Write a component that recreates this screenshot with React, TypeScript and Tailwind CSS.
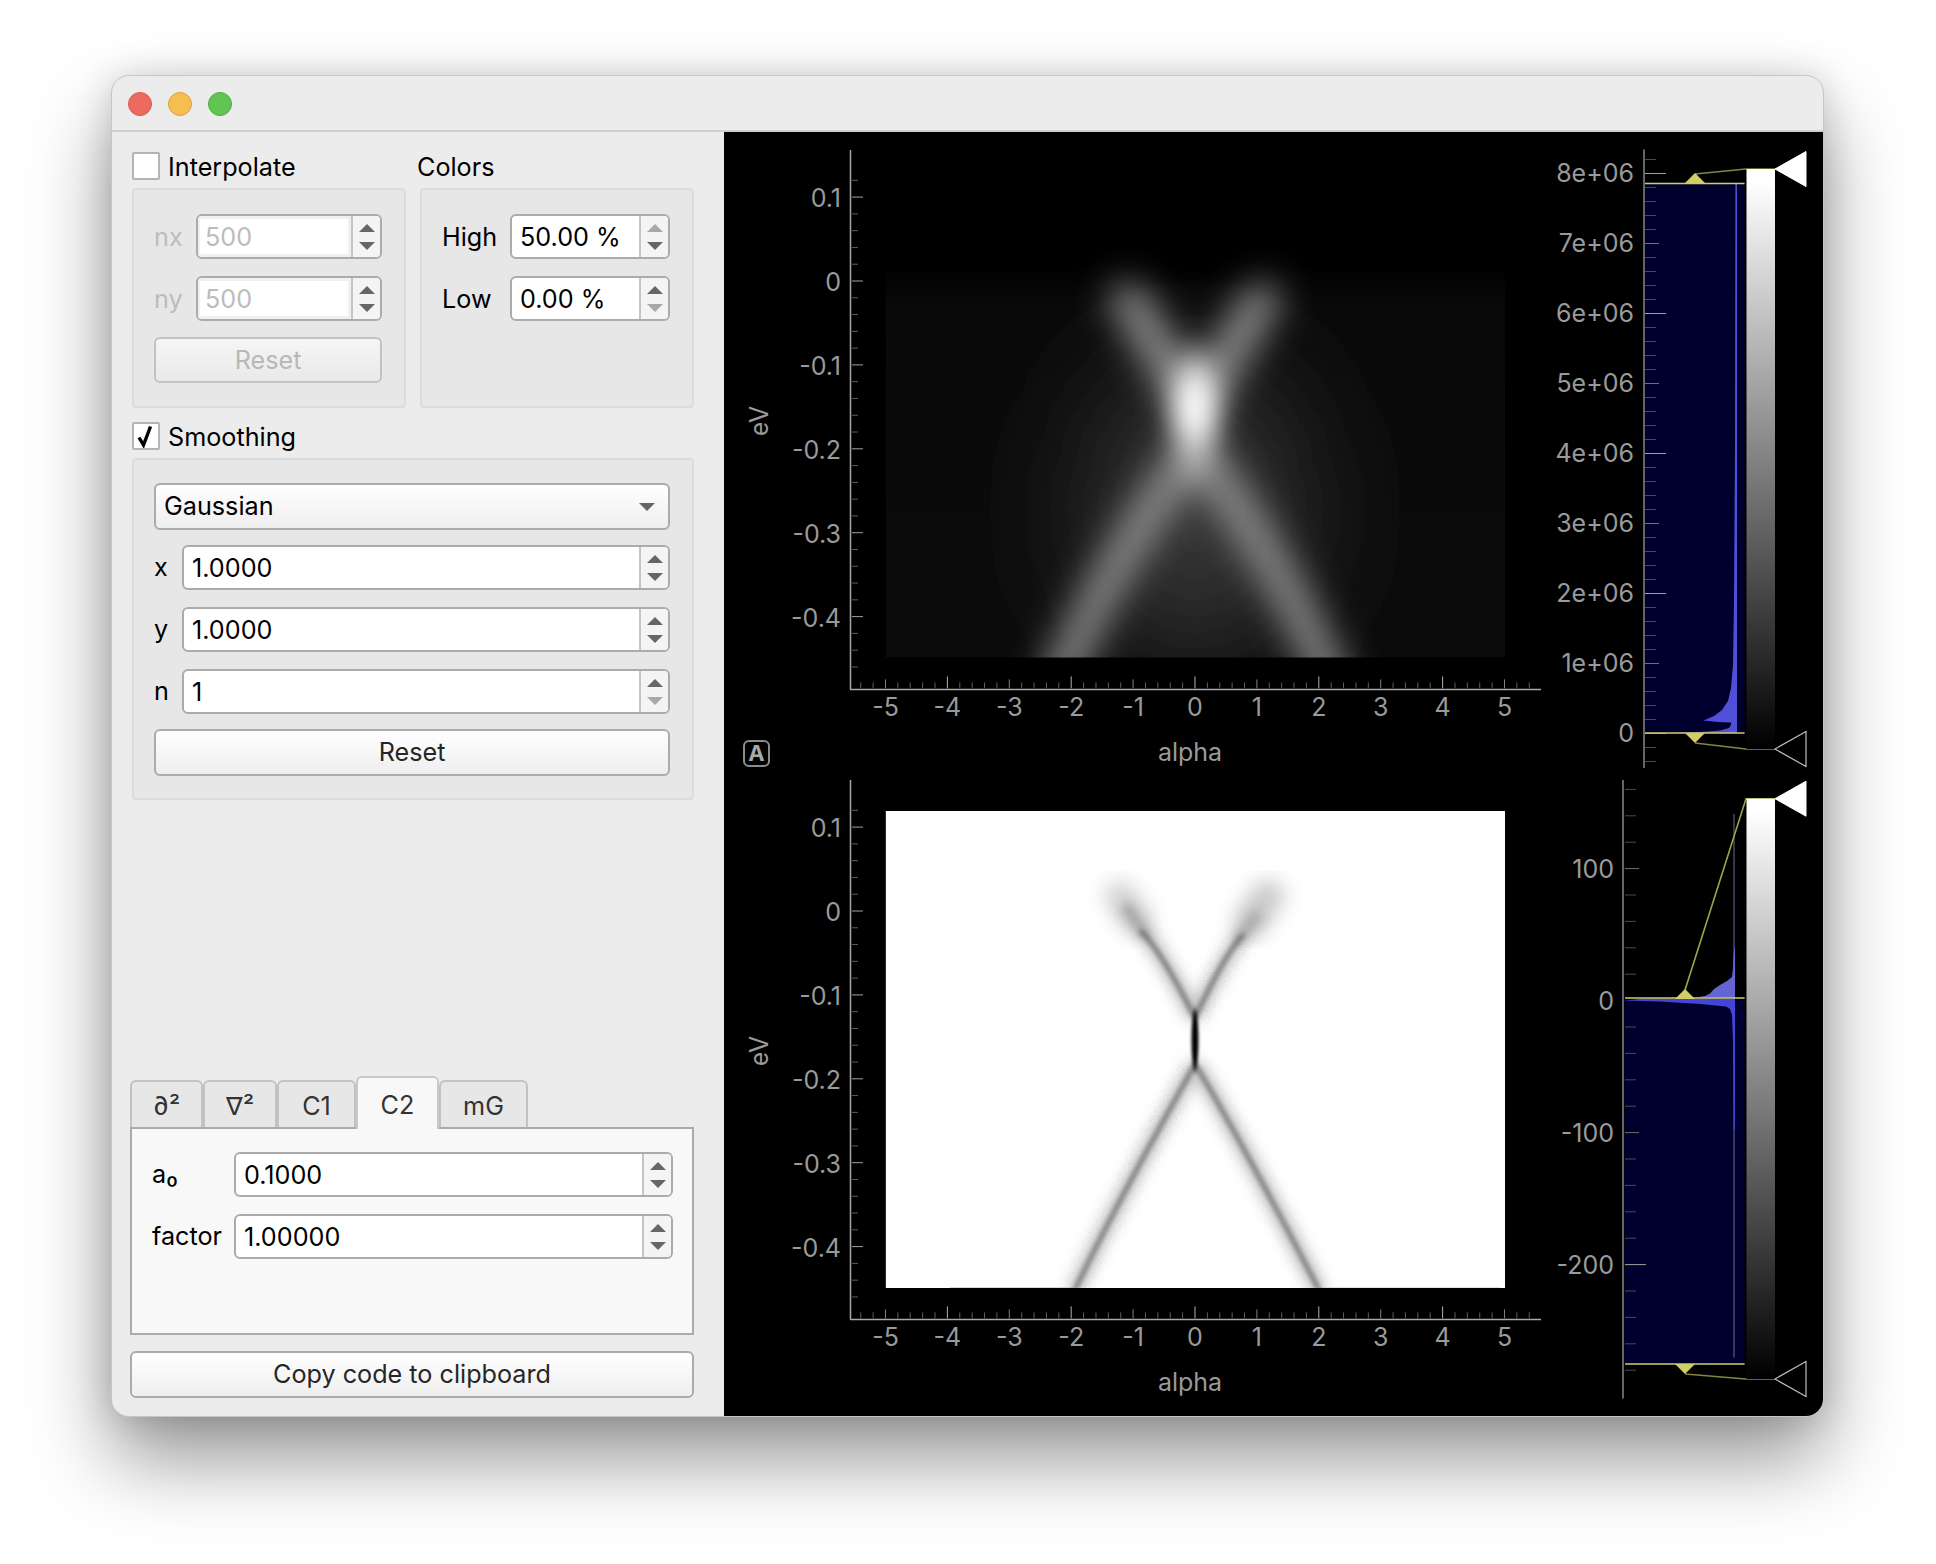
import React from 'react';

const Arrow = ({ dir, faded }: { dir: 'up' | 'down'; faded?: boolean }) => (
  <svg width="16" height="8" viewBox="0 0 16 8" className={faded ? 'fill-[#a8a8a8]' : 'fill-[#666666]'}>
    <polygon points={dir === 'up' ? '8,0 16,8 0,8' : '0,0 16,0 8,8'} />
  </svg>
);

type SpinProps = {
  value: string;
  className: string;
  disabled?: boolean;
  upFaded?: boolean;
  downFaded?: boolean;
};

const Spin = ({ value, className, disabled, upFaded, downFaded }: SpinProps) => (
  <div className={`flex h-[45px] rounded-[6px] border-2 border-[#ababab] bg-white ${className}`}>
    {disabled ? (
      <div className="flex-1 flex items-center pl-[5px] pt-[2px] rounded-l-[4px] text-[#bcbcbc] border-[3px] border-l-2 border-[#f0f0f0]">
        {value}
      </div>
    ) : (
      <div className="flex-1 flex items-center pl-[8px] pt-[3px] text-black">{value}</div>
    )}
    <div className="w-[29px] border-l-2 border-[#c4c4c4] bg-[#f4f4f4] rounded-r-[4px] flex flex-col items-center justify-center gap-[10px]">
      <Arrow dir="up" faded={upFaded} />
      <Arrow dir="down" faded={downFaded} />
    </div>
  </div>
);

const Check = ({ checked }: { checked?: boolean }) => (
  <div className="w-[28px] h-[28px] bg-white border-2 border-[#b4b4b4] rounded-[2px] flex items-center justify-center">
    {checked && (
      <svg width="20" height="24" viewBox="0 0 20 24">
        <path d="M3 13.5 L7.5 21 L14.5 2.5" fill="none" stroke="#000" strokeWidth="3.4" />
      </svg>
    )}
  </div>
);

const Group = ({ className, children }: { className: string; children: React.ReactNode }) => (
  <div className={`border-2 border-[#dcdcdc] rounded-[4px] bg-[#e7e7e7] ${className}`}>{children}</div>
);

const Button = ({ label, className }: { label: string; className: string }) => (
  <div
    className={`flex items-center justify-center pt-[1px] rounded-[6px] border-2 border-[#ababab] bg-gradient-to-b from-white to-[#eeeeee] text-[#262626] ${className}`}
  >
    {label}
  </div>
);

const Tab = ({ label, className }: { label: string; className: string }) => (
  <div
    className={`h-[47px] flex items-center justify-center pt-[5px] rounded-t-[6px] border-2 border-b-0 border-[#c2c2c2] bg-[#e7e7e7] text-[#333333] ${className}`}
  >
    {label}
  </div>
);

const range = (from: number, to: number, step: number) => {
  const out: number[] = [];
  for (let v = from; v <= to + 0.01; v += step) out.push(v);
  return out;
};

const AXIS = '#a8a8a8';
const LABEL = 'fill-[#9a9a9a] text-[25px]';

// left and bottom axes of a plot, in page coordinates of the upper plot plus dy
const Axes = ({ dy }: { dy: number }) => {
  const x0 = 1195;
  const xStep = 61.9;
  const y0 = 281 + dy;
  const yStep = 83.9;
  const axisY = 689.4 + dy;
  return (
    <g>
      <line x1="850.5" y1={150 + dy} x2="850.5" y2={axisY} stroke={AXIS} strokeWidth="1.5" />
      <line x1="850" y1={axisY} x2="1541" y2={axisY} stroke={AXIS} strokeWidth="1.5" />
      {range(-6, 23, 1).map((i) => {
        const y = y0 + (i * yStep) / 5;
        const major = i % 5 === 0;
        return (
          <line
            key={i}
            x1="852"
            x2={major ? 863 : 858}
            y1={y}
            y2={y}
            stroke={major ? '#a0a0a0' : '#5e5e5e'}
            strokeWidth="1"
          />
        );
      })}
      {range(-27, 27, 1).map((i) => {
        const x = x0 + (i * xStep) / 5;
        const major = i % 5 === 0;
        const even = i % 10 === 0;
        return (
          <line
            key={i}
            x1={x}
            x2={x}
            y1={axisY - (even ? 13 : major ? 10 : 7)}
            y2={axisY - 1}
            stroke={even ? '#b0b0b0' : major ? '#808080' : '#5e5e5e'}
            strokeWidth="1"
          />
        );
      })}
      {['0.1', '0', '-0.1', '-0.2', '-0.3', '-0.4'].map((t, i) => (
        <text key={t} x="841" y={y0 + (i - 1) * yStep + 10} textAnchor="end" className={LABEL}>
          {t}
        </text>
      ))}
      {[-5, -4, -3, -2, -1, 0, 1, 2, 3, 4, 5].map((t) => (
        <text key={t} x={x0 + t * xStep} y={716 + dy} textAnchor="middle" className={LABEL}>
          {t}
        </text>
      ))}
      <text x="1190" y={761 + dy} textAnchor="middle" className={LABEL}>
        alpha
      </text>
      <text
        x="768"
        y={421 + dy}
        textAnchor="middle"
        transform={`rotate(-90 768 ${421 + dy})`}
        className={LABEL}
      >
        eV
      </text>
    </g>
  );
};

const GrayBar = ({ top, bottom, id }: { top: number; bottom: number; id: string }) => (
  <g>
    <defs>
      <linearGradient id={id} x1="0" y1="0" x2="0" y2="1">
        <stop offset="0" stopColor="#ffffff" />
        <stop offset="0.02" stopColor="#ffffff" />
        <stop offset="1" stopColor="#000000" />
      </linearGradient>
    </defs>
    <rect x="1746.5" y={top} width="28.5" height={bottom - top} fill={`url(#${id})`} />
    <polygon points={`1775,${top} 1806,${top - 17.5} 1806,${top + 17.5}`} fill="#ffffff" stroke="#ffffff" />
    <polygon
      points={`1775,${bottom} 1806,${bottom - 17.5} 1806,${bottom + 17.5}`}
      fill="none"
      stroke="#bcbcbc"
      strokeWidth="1.2"
    />
  </g>
);

const Handles = ({
  x,
  hi,
  lo,
  barTop,
  barBottom,
  hiLineColor,
}: {
  x: number;
  hi: number;
  lo: number;
  barTop: number;
  barBottom: number;
  hiLineColor: string;
}) => (
  <g>
    <polyline points={`${x},${hi - 9} 1746,${barTop} 1775,${barTop}`} fill="none" stroke={hiLineColor} strokeWidth="1.6" />
    <polyline points={`${x},${lo + 10} 1746,${barBottom} 1775,${barBottom}`} fill="none" stroke="#85853f" strokeWidth="1.6" />
    <polygon points={`${x - 10},${hi} ${x},${hi - 10} ${x + 10},${hi}`} fill="#cfcf66" />
    <polygon points={`${x - 10},${lo} ${x},${lo + 10} ${x + 10},${lo}`} fill="#cfcf66" />
  </g>
);

const TopHist = () => {
  const labels = ['8e+06', '7e+06', '6e+06', '5e+06', '4e+06', '3e+06', '2e+06', '1e+06', '0'];
  return (
    <g>
      <rect x="1645" y="183.5" width="99.6" height="549.5" fill="#00002e" />
      <path
        d="M1735.4 183.5 L1737 183.5 L1737 733 L1668 733 L1700 732 L1720 730.5 L1729 728 L1731 725 L1731 722.5 L1718 722 L1703.5 720.5 L1714 716 L1722 710 L1728 701 L1731 688 L1733 665 L1734 600 L1735 450 Z"
        fill="#4f4fd8"
      />
      <line x1="1644" y1="149.5" x2="1644" y2="768" stroke={AXIS} strokeWidth="1.2" />
      {range(-1, 42, 1).map((i) => {
        const y = 173.5 + i * 14;
        const major = i % 5 === 0;
        const long = i % 10 === 0;
        return (
          <line
            key={i}
            x1="1645"
            x2={long ? 1666 : major ? 1659 : 1656}
            y1={y}
            y2={y}
            stroke={long ? '#a0a0a0' : major ? '#707070' : '#4a4a4a'}
            strokeWidth="1"
          />
        );
      })}
      {labels.map((t, i) => (
        <text key={t} x="1634" y={173 + i * 70 + 9} textAnchor="end" className={LABEL}>
          {t}
        </text>
      ))}
      <line x1="1645" y1="183.5" x2="1744.6" y2="183.5" stroke="#cfcf66" strokeWidth="1.3" />
      <line x1="1645" y1="733" x2="1744.6" y2="733" stroke="#cfcf66" strokeWidth="1.3" />
      <Handles x={1695} hi={183} lo={733} barTop={169} barBottom={749} hiLineColor="#85853f" />
      <GrayBar top={169} bottom={749} id="bar-top" />
    </g>
  );
};

const BottomHist = () => (
  <g>
    <rect x="1624.5" y="1000" width="120" height="364" fill="#00002e" />
    <line x1="1734" y1="814" x2="1734" y2="1357.5" stroke="#6c6c8c" strokeWidth="1" />
    <path
      d="M1695 997.5 L1705 996 L1710 993.5 L1714 989 L1720 985 L1727 981 L1732 977 L1733 968 L1733.5 955 L1735 945 L1735 998 Z"
      fill="#6464d2"
    />
    <path
      d="M1645 998.5 L1735 998.5 L1735 1040 L1734.8 1130 L1733.8 1130 L1733 1040 L1732 1015 L1730 1009 L1726 1006.5 L1700 1004 L1660 1001.5 L1624 1000.5 Z"
      fill="#4444d6"
    />
    <line x1="1623" y1="780" x2="1623" y2="1398.5" stroke={AXIS} strokeWidth="1.2" />
    {range(-3, 19, 1).map((i) => {
      const y = 868.6 + i * 26.4;
      const major = i % 5 === 0;
      const long = i === 15;
      return i === 5 ? null : (
        <line
          key={i}
          x1="1625"
          x2={long ? 1646 : major ? 1639 : 1636}
          y1={y}
          y2={y}
          stroke={long ? '#a0a0a0' : major ? '#707070' : '#4a4a4a'}
          strokeWidth="1"
        />
      );
    })}
    {[
      ['100', 868.6],
      ['0', 1000.7],
      ['-100', 1133],
      ['-200', 1265],
    ].map(([t, y]) => (
      <text key={t} x="1614" y={Number(y) + 9} textAnchor="end" className={LABEL}>
        {t}
      </text>
    ))}
    <line x1="1625" y1="998" x2="1744.6" y2="998" stroke="#cfcf66" strokeWidth="1.3" />
    <line x1="1625" y1="1364" x2="1744.6" y2="1364" stroke="#cfcf66" strokeWidth="1.3" />
    <Handles x={1685} hi={999} lo={1364} barTop={798.7} barBottom={1379} hiLineColor="#a3a34a" />
    <GrayBar top={798.7} bottom={1379} id="bar-bottom" />
  </g>
);

const TopImage = () => (
  <g>
    <defs>
      <filter id="b40" x="-150%" y="-100%" width="400%" height="300%">
        <feGaussianBlur stdDeviation="70 60" />
      </filter>
      <filter id="b14" x="-50%" y="-50%" width="200%" height="200%">
        <feGaussianBlur stdDeviation="19" />
      </filter>
      <filter id="b11" x="-200%" y="-100%" width="500%" height="300%">
        <feGaussianBlur stdDeviation="13 22" />
      </filter>
      <clipPath id="clip-top">
        <rect x="885.6" y="181" width="619.4" height="476.6" />
      </clipPath>
      <linearGradient id="base-top" x1="0" y1="0" x2="0" y2="1">
        <stop offset="0" stopColor="#000000" />
        <stop offset="0.18" stopColor="#000000" />
        <stop offset="0.26" stopColor="#090909" />
        <stop offset="1" stopColor="#0b0b0b" />
      </linearGradient>
    </defs>
    <g clipPath="url(#clip-top)">
      <rect x="885.6" y="181" width="619.4" height="476.6" fill="url(#base-top)" />
      <g filter="url(#b40)">
        <ellipse cx="1195" cy="510" rx="90" ry="150" fill="#404040" />
      </g>
      <g filter="url(#b14)" fill="none" stroke="#b4b4b4" strokeLinecap="round">
        <path d="M1127 298 C1145 328 1172 368 1195 415" strokeWidth="28" />
        <path d="M1263 298 C1245 328 1218 368 1195 415" strokeWidth="28" />
        <path d="M1195 450 C1165 485 1095 590 1056 690" strokeWidth="28" stroke="#a8a8a8" />
        <path d="M1195 450 C1225 485 1295 590 1334 690" strokeWidth="28" stroke="#a8a8a8" />
      </g>
      <g filter="url(#b11)">
        <ellipse cx="1195" cy="409" rx="22" ry="46" fill="#ffffff" />
      </g>
    </g>
  </g>
);

const BottomImage = () => (
  <g>
    <defs>
      <filter id="c6" x="-30%" y="-30%" width="160%" height="160%">
        <feGaussianBlur stdDeviation="7" result="soft" />
        <feTurbulence type="fractalNoise" baseFrequency="0.8" numOctaves="2" seed="3" result="grain" />
        <feDisplacementMap in="soft" in2="grain" scale="7" />
      </filter>
      <filter id="c25" x="-30%" y="-30%" width="160%" height="160%">
        <feGaussianBlur stdDeviation="2.5" />
      </filter>
      <filter id="c4" x="-100%" y="-100%" width="300%" height="300%">
        <feGaussianBlur stdDeviation="4" />
      </filter>
      <filter id="c10" x="-100%" y="-100%" width="300%" height="300%">
        <feGaussianBlur stdDeviation="10" />
      </filter>
      <filter id="c2" x="-400%" y="-50%" width="900%" height="200%">
        <feGaussianBlur stdDeviation="1.5 3.5" />
      </filter>
      <clipPath id="clip-bottom">
        <rect x="885.6" y="811" width="619.4" height="477" />
      </clipPath>
    </defs>
    <g clipPath="url(#clip-bottom)">
      <rect x="885.6" y="811" width="619.4" height="477" fill="#ffffff" />
      <line x1="950" y1="1287.5" x2="1074" y2="1287.5" stroke="#d8d8d8" strokeWidth="1" />
      <line x1="1320" y1="1287.5" x2="1500" y2="1287.5" stroke="#e0e0e0" strokeWidth="1" />
      <g filter="url(#c10)" fill="none" strokeLinecap="round">
        <path d="M1120 896 L1138 922" stroke="#d0d0d0" strokeWidth="30" />
        <path d="M1268 896 L1250 922" stroke="#c8c8c8" strokeWidth="32" />
      </g>
      <g filter="url(#c6)" fill="none" stroke="#c2c2c2" strokeWidth="16">
        <path d="M1124 905 C1146 932 1172 972 1195 1018" />
        <path d="M1260 912 C1236 940 1215 975 1195 1018" />
        <path d="M1195 1064 C1170 1110 1120 1195 1074 1292" />
        <path d="M1195 1064 C1220 1105 1270 1195 1320 1292" />
      </g>
      <g filter="url(#c4)" fill="none" strokeLinecap="round">
        <path d="M1127 908 L1146 936" stroke="#a4a4a4" strokeWidth="8" />
        <path d="M1256 916 L1238 940" stroke="#a8a8a8" strokeWidth="8" />
      </g>
      <g filter="url(#c25)" fill="none" stroke="#6a6a6a" strokeWidth="4">
        <path d="M1140 930 C1152 942 1172 972 1195 1018" />
        <path d="M1244 934 C1230 948 1215 975 1195 1018" />
        <path d="M1195 1064 C1170 1110 1120 1195 1074 1292" />
        <path d="M1195 1064 C1220 1105 1270 1195 1320 1292" />
      </g>
      <g filter="url(#c2)">
        <ellipse cx="1195" cy="1040" rx="3.5" ry="30" fill="#000000" />
      </g>
    </g>
  </g>
);

export default function App() {
  return (
    <div className="min-h-[1564px] bg-white pl-[111px] pt-[75px] font-['Inter',sans-serif] text-[25.2px] text-black">
      <div className="w-[1713px] h-[1342px] rounded-[18px] overflow-hidden border border-[#c6c6c6] bg-[#ececec] flex flex-col shadow-[0_42px_80px_rgba(0,0,0,0.42),0_0_34px_rgba(0,0,0,0.14)]">
        <div className="h-[56px] flex items-center gap-[16px] pl-[16px] pt-[1px] border-b-2 border-[#cfcfcf] shrink-0">
          <div className="w-[24px] h-[24px] rounded-full bg-[#ed6a5e] border border-[#d65a4e]" />
          <div className="w-[24px] h-[24px] rounded-full bg-[#f5bf4f] border border-[#d6a243]" />
          <div className="w-[24px] h-[24px] rounded-full bg-[#61c554] border border-[#52a942]" />
        </div>
        <div className="flex flex-1 min-h-0">
          <div className="w-[612px] shrink-0 flex flex-col pl-[20px] pr-[30px] pt-[20px] pb-[18px]">
            <div className="flex gap-[14px]">
              <div className="w-[274px]">
                <div className="flex items-center gap-[8px] h-[28px]">
                  <Check />
                  <span className="pt-[4px]">Interpolate</span>
                </div>
                <Group className="mt-[8px] h-[220px] pt-[24px] pl-[20px]">
                  <div className="flex items-center">
                    <span className="w-[42px] pt-[2px] text-[#bcbcbc]">nx</span>
                    <Spin value="500" className="w-[186px]" disabled />
                  </div>
                  <div className="flex items-center mt-[17px]">
                    <span className="w-[42px] pt-[2px] text-[#bcbcbc]">ny</span>
                    <Spin value="500" className="w-[186px]" disabled />
                  </div>
                  <div className="mt-[16px] w-[228px] h-[46px] flex items-center justify-center pt-[2px] rounded-[6px] border-2 border-[#c2c2c2] bg-gradient-to-b from-[#f6f6f6] to-[#e9e9e9] text-[#b8b8b8]">
                    Reset
                  </div>
                </Group>
              </div>
              <div className="w-[274px]">
                <div className="h-[28px] flex items-center pt-[4px] -ml-[3px]">Colors</div>
                <Group className="mt-[8px] h-[220px] pt-[24px] pl-[20px]">
                  <div className="flex items-center">
                    <span className="w-[68px] pt-[2px]">High</span>
                    <Spin value="50.00 %" className="w-[160px]" upFaded />
                  </div>
                  <div className="flex items-center mt-[17px]">
                    <span className="w-[68px] pt-[2px]">Low</span>
                    <Spin value="0.00 %" className="w-[160px]" downFaded />
                  </div>
                </Group>
              </div>
            </div>
            <div className="flex items-center gap-[8px] h-[28px] mt-[14px]">
              <Check checked />
              <span className="pt-[3px]">Smoothing</span>
            </div>
            <Group className="mt-[8px] h-[342px] pt-[23px] pl-[20px] pr-[22px]">
              <div className="h-[47px] flex items-center justify-between rounded-[6px] border-2 border-[#ababab] bg-gradient-to-b from-white to-[#eeeeee] pl-[8px] pr-[13px]">
                <span className="pt-[1px]">Gaussian</span>
                <svg width="16" height="8" viewBox="0 0 16 8" className="fill-[#666666]">
                  <polygon points="0,0 16,0 8,8" />
                </svg>
              </div>
              <div className="flex items-center mt-[15px]">
                <span className="w-[28px] pt-[1px]">x</span>
                <Spin value="1.0000" className="flex-1" />
              </div>
              <div className="flex items-center mt-[17px]">
                <span className="w-[28px] pt-[1px]">y</span>
                <Spin value="1.0000" className="flex-1" />
              </div>
              <div className="flex items-center mt-[17px]">
                <span className="w-[28px] pt-[1px]">n</span>
                <Spin value="1" className="flex-1" downFaded />
              </div>
              <Button label="Reset" className="mt-[15px] h-[47px]" />
            </Group>
            <div className="flex-1" />
            <div className="flex items-end -ml-[2px] relative z-10 h-[53px]">
              <Tab label="∂²" className="w-[73px]" />
              <Tab label="∇²" className="w-[74px]" />
              <Tab label="C1" className="w-[79px]" />
              <div className="w-[83px] h-[53px] flex items-start pt-[9px] justify-center rounded-t-[6px] border-2 border-b-0 border-[#c8c8c8] bg-[#f8f8f8] text-[#333333] -mb-[2px]">
                C2
              </div>
              <Tab label="mG" className="w-[89px]" />
            </div>
            <div className="-ml-[2px] h-[208px] border-2 border-[#ababab] bg-[#f8f8f8] pt-[23px] pl-[20px] pr-[19px]">
              <div className="flex items-center">
                <span className="w-[82px]">a₀</span>
                <Spin value="0.1000" className="flex-1" />
              </div>
              <div className="flex items-center mt-[17px]">
                <span className="w-[82px] pt-[1px]">factor</span>
                <Spin value="1.00000" className="flex-1" />
              </div>
            </div>
            <Button label="Copy code to clipboard" className="-ml-[2px] mt-[16px] h-[47px]" />
          </div>
          <div className="flex-1 bg-black flex flex-col">
            <svg viewBox="724 132 1100 630" className="w-[1100px] h-[630px] overflow-visible shrink-0">
              <TopImage />
              <Axes dy={0} />
              <rect x="744" y="741" width="25" height="25" rx="5" fill="none" stroke="#8c8c8c" strokeWidth="2" />
              <text x="756.5" y="761" textAnchor="middle" className="fill-[#a8a8a8] text-[22px] font-bold">
                A
              </text>
              <TopHist />
            </svg>
            <svg viewBox="724 762 1100 630" className="w-[1100px] h-[630px] overflow-visible shrink-0">
              <BottomImage />
              <Axes dy={630} />
              <BottomHist />
            </svg>
          </div>
        </div>
      </div>
    </div>
  );
}
